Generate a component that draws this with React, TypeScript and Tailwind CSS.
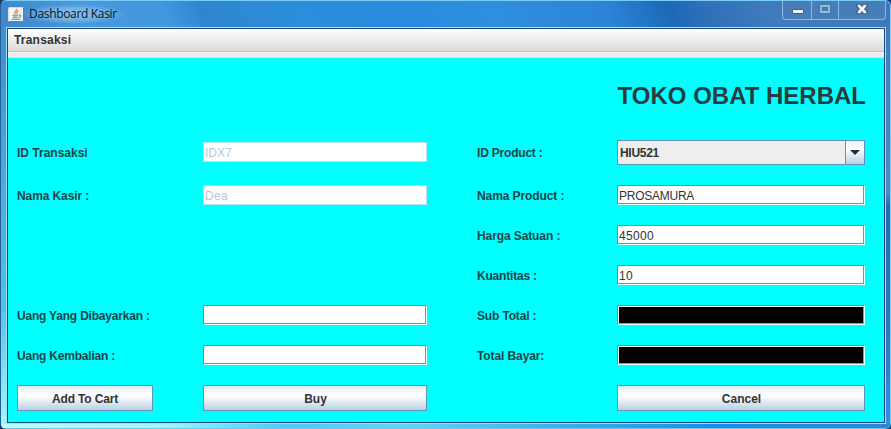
import type { ReactNode } from "react";

function Label({ children, className = "pt-[2px]" }: { children: ReactNode; className?: string }) {
  return (
    <div className={`self-center text-[12px] font-bold leading-[14px] whitespace-nowrap text-[#1c464a] ${className}`}>
      {children}
    </div>
  );
}

type FieldKind = "normal" | "disabled" | "dark";

function Field({ value = "", kind = "normal", className = "" }: { value?: string; kind?: FieldKind; className?: string }) {
  if (kind === "disabled") {
    return (
      <div
        className={`h-5 self-center border border-[#b8e3f5] bg-white pl-px text-[12px] leading-[20px] text-[#b8c7dc] ${className}`}
      >
        {value}
      </div>
    );
  }
  return (
    <div className="h-5 self-center border-t border-l border-r border-b border-t-[#5d94a8] border-r-[#e8ffff] border-b-[#e8ffff] border-l-[#5d94a8]">
      <div
        className={
          kind === "dark"
            ? "h-[18px] border border-t-[#f4f4f4] border-r-[#7d9eaa] border-b-[#7d9eaa] border-l-[#f4f4f4] bg-black"
            : "h-[18px] border-r border-b border-[#6f98a9] bg-white pl-px text-[12px] leading-[20px] text-[#333]"
        }
      >
        <span className={className}>{value}</span>
      </div>
    </div>
  );
}

function Button({ children, className = "" }: { children: ReactNode; className?: string }) {
  return (
    <button
      className={`h-[26px] self-center border border-[#5f98ae] bg-[linear-gradient(to_bottom,#dfe9f3_0%,#ffffff_32%,#f8fafc_48%,#b8cfe5_100%)] pt-px text-center text-[12px] leading-[14px] font-bold text-[#333] ${className}`}
    >
      {children}
    </button>
  );
}

function JavaIcon() {
  return (
    <svg width="16" height="15" viewBox="0 0 16 15" className="shrink-0">
      <rect x="0.5" y="0.5" width="15" height="14" rx="1" fill="#f3f4f3" stroke="#cfdce3" />
      <path d="M15.5 1v13.5H1" fill="none" stroke="#737c83" />
      <path d="M8.8 1.8c1 2-3.6 2.7-1.4 5.4M10.6 4c-2.4.9-2 1.5-1.2 3" fill="none" stroke="#e58a49" strokeWidth="1.3" />
      <path d="M4.4 8.2h5.6M5 10.1h4.6M3.4 12.2h9M10.6 8c3.2-.4 2.4 2.2 0 2.4" fill="none" stroke="#66849b" strokeWidth="1.1" />
    </svg>
  );
}

function WindowControls() {
  return (
    <div className="flex h-[19px] w-[104px] rounded-b-[4px] border border-t-0 border-[#8ab9e3] bg-[#477db8]">
      <div className="w-[29px] border-r border-[#8ab9e3]">
        <svg width="28" height="18">
          <rect x="9.5" y="8.5" width="11" height="4" rx="0.5" fill="#f4f4f4" stroke="#415f7c" />
        </svg>
      </div>
      <div className="w-[27px] border-r border-[#8ab9e3]">
        <svg width="26" height="18">
          <path d="M9 5h8v6H9z" fill="none" stroke="#4477a8" strokeWidth="4" />
          <path d="M9 5h8v6H9z" fill="none" stroke="#8fc0de" strokeWidth="1.8" />
        </svg>
      </div>
      <svg width="46" height="18">
        <path d="m19.8 4.7 6.4 6.6m0-6.6-6.4 6.6" stroke="#334f70" strokeWidth="4.6" />
        <path d="M17.5 4.5h4m3 0h4M17.5 11.5h4m3 0h4" stroke="#334f70" strokeWidth="3" />
        <path d="m19.8 4.7 6.4 6.6m0-6.6-6.4 6.6" stroke="#fafafa" strokeWidth="2.8" />
        <path d="M18.5 4.5h3m3 0h3M18.5 11.5h3m3 0h3" stroke="#fafafa" strokeWidth="1.5" />
      </svg>
    </div>
  );
}

export default function App() {
  return (
    <div className="h-[429px] w-[891px] overflow-hidden bg-[#0d3c70] font-['Liberation_Sans',Arial,sans-serif]">
      <div className="flex h-[429px] w-[891px] flex-col rounded-[6px] border border-t-[#79cdf7] border-r-[#83c9f4] border-b-[#6cc8f5] border-l-[#27618d] bg-[linear-gradient(to_bottom,#3b82ca_0%,#43a3e7_35%,#57c9f8_70%,#a4faff_100%)]">
        <header className="flex h-[26px] shrink-0 items-start justify-between rounded-t-[5px] bg-[linear-gradient(65deg,#3f86cb_0%,#4a98dd_10%,#4298df_19%,#2f86cf_23%,#2b8edb_34%,#288bdb_45%,#2f8fde_55%,#2c84d6_68%,#1c69b8_75%,#2f70b8_79%,#407bbd_86%,#3f78b8_100%)] pr-[4px] pl-[7px]">
          <div className="flex h-[26px] items-center">
            <JavaIcon />
            <div className="-ml-[3px] bg-[radial-gradient(closest-side,#a8d4f4b0_0%,#95c9ed80_60%,transparent_100%)] px-[8px] font-['Open_Sans','Noto_Sans',sans-serif] text-[12px] leading-[20px] tracking-[-0.32px] text-[#071522]">
              Dashboard Kasir
            </div>
          </div>
          <WindowControls />
        </header>
        <div className="flex min-h-0 flex-1">
          <div className="w-[5px] shrink-0 bg-[linear-gradient(to_bottom,#3e8ed5,#43a9e5_35%,#4fc1ee_70%,#9cfaff)]" />
          <main className="flex h-[397px] w-[880px] shrink-0 flex-col border border-[#a8dff3]">
            <div className="flex h-[395px] flex-col border border-[#164b76]">
              <nav className="flex h-[22px] shrink-0 items-center bg-[linear-gradient(to_bottom,#ffffff,#dadada)] pl-[6px] text-[12px] leading-[14px] font-bold tracking-[0.2px] text-[#333]">
                Transaksi
              </nav>
              <div className="h-[7px] shrink-0 border-t border-b border-t-[#c5c3cc] border-b-[#dadfe3] bg-[#eeeef0]" />
              <section className="flex min-h-0 flex-1 flex-col bg-[#00ffff] pl-[9px]">
                <div className="flex h-[72px] shrink-0 items-center justify-end pt-[4px] pr-[18px]">
                  <h1 className="text-[24px] leading-[28px] font-bold whitespace-nowrap text-[#263c3e]">TOKO OBAT HERBAL</h1>
                </div>
                <div className="grid h-[291px] grid-cols-[186px_224px_50px_140px_248px] grid-rows-[45px_40px_40px_40px_40px_40px_46px]">
                  <Label className="pt-0">ID Transaksi</Label>
                  <Field value="IDX7" kind="disabled" className="mb-px" />
                  <span />
                  <Label className="pt-0 tracking-[-0.2px]">ID Product :</Label>
                  <div className="flex h-[25px] self-center border border-[#6293b5] bg-[#eee] text-[12px] font-bold text-[#333]">
                    <span className="flex flex-1 items-center pl-[2px] tracking-[-0.3px]">HIU521</span>
                    <span className="flex w-[19px] items-center justify-center border-l border-[#6293b5] bg-[linear-gradient(to_bottom,#e8f0f8,#ffffff_35%,#b8cfe5)]">
                      <svg width="10" height="5" viewBox="0 0 10 5"><path d="M0 0h10L5 5z" fill="#292f32" /></svg>
                    </span>
                  </div>

                  <Label className="pt-[2px] tracking-[-0.1px]">Nama Kasir :</Label>
                  <Field value="Dea" kind="disabled" className="tracking-[0.3px]" />
                  <span />
                  <Label className="pt-[2px] tracking-[-0.1px]">Nama Product :</Label>
                  <Field value="PROSAMURA" className="tracking-[-0.25px]" />

                  <span className="col-span-3" />
                  <Label className="pt-[2px] tracking-[-0.1px]">Harga Satuan :</Label>
                  <Field value="45000" className="tracking-[0.3px]" />

                  <span className="col-span-3" />
                  <Label className="pt-[2px] tracking-[-0.2px]">Kuantitas :</Label>
                  <Field value="10" className="tracking-[0.3px]" />

                  <Label className="pt-[2px] tracking-[-0.2px]">Uang Yang Dibayarkan :</Label>
                  <Field />
                  <span />
                  <Label className="pt-[2px] tracking-[-0.15px]">Sub Total :</Label>
                  <Field kind="dark" />

                  <Label className="pt-[2px] tracking-[-0.2px]">Uang Kembalian :</Label>
                  <Field />
                  <span />
                  <Label className="pt-[2px] tracking-[-0.1px]">Total Bayar:</Label>
                  <Field kind="dark" />

                  <Button className="w-[136px] tracking-[-0.15px]">Add To Cart</Button>
                  <Button className="pl-px">Buy</Button>
                  <span className="col-span-2" />
                  <Button className="pl-px">Cancel</Button>
                </div>
              </section>
            </div>
          </main>
          <div className="flex-1 bg-[linear-gradient(to_bottom,#447bbb,#4889ce_42%,#246abb_45%,#2d74c5_75%,#2f8fe8)]" />
        </div>
        <div className="h-[4px] shrink-0 rounded-b-[4px] bg-[linear-gradient(to_right,#b8ffff,#9cf8ff_18%,#52c6f8_32%,#6ad0f8_45%,#3fb0ee_62%,#1c8bf0_80%,#2c84dc)]" />
      </div>
    </div>
  );
}
